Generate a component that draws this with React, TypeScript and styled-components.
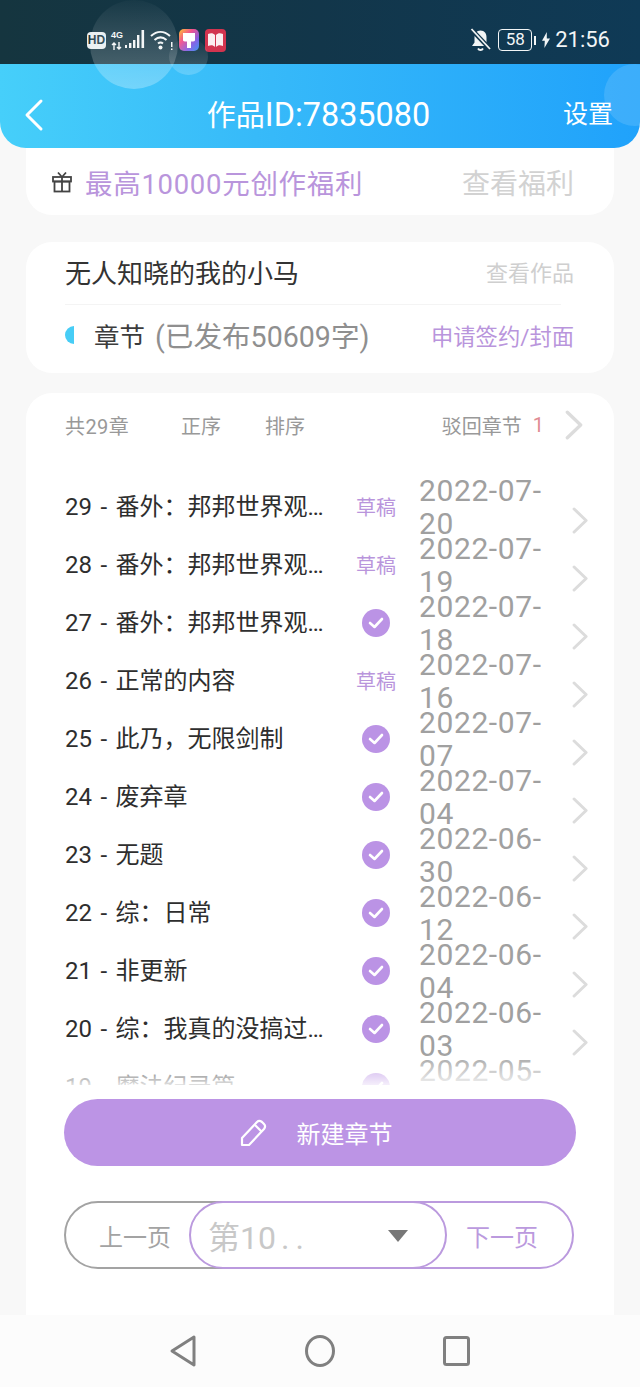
import React from 'react';
import styled, { createGlobalStyle } from 'styled-components';

const Global = createGlobalStyle`
  html, body { margin: 0; padding: 0; background: #f8f8f8; }
  * { box-sizing: border-box; }
  body { font-family: Roboto, "Noto Sans CJK SC", sans-serif; }
`;

const Screen = styled.div`
  position: relative; width: 640px; height: 1387px; overflow: hidden;
  display: flex; flex-direction: column; background: #f8f8f8;
`;
const StatusBar = styled.div`
  height: 64px; flex: none; padding: 16px 30px 0 87px;
  display: flex; justify-content: space-between; align-items: center;
  background: linear-gradient(90deg, #15353f 0%, #12364a 50%, #0f3a56 100%);
  color: #f2f5f6;
`;
const StatusGroup = styled.div`display: flex; align-items: center; gap: ${p => p.$gap ?? 4}px;`;
const HdBadge = styled.span`
  width: 19px; height: 17px; border-radius: 4px; background: #e8eef0; color: #15353f;
  font: 700 12px/17px "Liberation Sans", sans-serif; text-align: center;
`;
const Net = styled.span`
  width: 12px; display: flex; flex-direction: column; align-items: flex-start; gap: 2px;
  font: 700 9px/9px "Liberation Sans", sans-serif; margin-left: 2px; margin-right: -1px;
`;
const Battery = styled.span`
  width: 34px; height: 22px; border: 1.5px solid #f2f5f6; border-radius: 4px;
  font: 400 17px/19px Roboto, sans-serif; text-align: center; margin-left: 4px;
`;
const BatteryTip = styled.span`width: 2px; height: 9px; background: #f2f5f6; margin-left: -1px;`;
const Clock = styled.span`font: 400 22px/26px Roboto, sans-serif; margin-left: 2px;`;
const Bubble = styled.div`
  position: absolute; z-index: 3; pointer-events: none; border-radius: 50%;
  left: ${p => p.$x}px; top: ${p => p.$y}px; width: ${p => p.$w}px; height: ${p => p.$h}px;
  background: ${p => p.$bg};
`;
const Header = styled.header`
  height: 84px; flex: none; position: relative; z-index: 2; padding: 18px 27px 0 24px;
  display: grid; grid-template-columns: 60px 1fr 60px; align-items: center;
  border-radius: 0 0 26px 26px; color: #fff;
  background: linear-gradient(90deg, #46cffa 0%, #37baf9 40%, #20a2fb 100%);
`;
const Title = styled.h1`margin: 0; text-align: center; font-size: 29px; font-weight: 400; line-height: 40px; white-space: nowrap;`;
const TitleId = styled.span`font-size: 32.4px;`;
const Setting = styled.span`font-size: 25px; line-height: 34px; text-align: right; white-space: nowrap;`;
const Card = styled.section`
  margin: 0 26px; background: #fff; border-radius: 26px; flex: none;
`;
const PromoCard = styled(Card)`
  height: 67px; border-radius: 0 0 26px 26px; padding: 0 40px 0 26px;
  display: flex; align-items: center;
`;
const PromoText = styled.span`font-size: 27.5px; letter-spacing: .7px; color: #b995dc; margin-left: 13px; flex: 1; line-height: 36px; padding-top: 6px;`;
const PromoLink = styled.span`font-size: 28px; color: #d2d2d2; line-height: 36px; padding-top: 6px;`;
const WorkCard = styled(Card)`margin-top: 27px; height: 131px; padding: 0 40px 0 39px;`;
const WorkTop = styled.div`
  height: 63px; display: flex; justify-content: space-between; align-items: center; position: relative;
  &::after { content: ""; position: absolute; left: 0; bottom: 0; width: 496px; height: 1px; background: #f4f4f4; }
`;
const WorkName = styled.span`font-size: 26px; color: #333; line-height: 34px;`;
const WorkLink = styled.span`font-size: 22px; color: #cfcfcf; line-height: 30px;`;
const WorkBottom = styled.div`height: 59px; display: flex; align-items: center;`;
const HalfDot = styled.span`width: 9px; height: 18px; border-radius: 9px 0 0 9px; background: #47cdf6; flex: none; margin-right: 20px;`;
const ChapterLabel = styled.span`font-size: 25.5px; color: #3c3c3c;`;
const ChapterCount = styled.span`font-size: 28.6px; color: #8f8f8f; margin-left: 10px; flex: 1; white-space: nowrap;`;
const ApplyLink = styled.span`font-size: 22.3px; color: #b995dc; white-space: nowrap;`;
const ListCard = styled(Card)`
  margin-top: 20px; flex: 1; border-radius: 26px 26px 0 0; padding: 16px 0 0 0;
  display: flex; flex-direction: column;
`;
const ListHead = styled.div`
  height: 32px; flex: none; margin-bottom: 33px; padding: 0 31px 0 39px;
  display: flex; align-items: center; color: #999; font-size: 20px;
`;
const HeadTotal = styled.span`width: 116px; letter-spacing: .4px;`;
const HeadSort = styled.span`width: 84px;`;
const HeadReject = styled.span`margin-left: auto;`;
const HeadBadge = styled.span`color: #e08a93; margin-left: 11px; margin-right: 21px;`;
const ListWrap = styled.div`position: relative; height: 611px; flex: none; overflow: hidden;`;
const Fade = styled.div`
  position: absolute; left: 0; right: 0; bottom: 0; height: 32px; z-index: 2;
  background: linear-gradient(180deg, rgba(255,255,255,0) 0%, rgba(255,255,255,.85) 100%);
`;
const Row = styled.div`
  height: 58px; display: grid; grid-template-columns: 272px 78px 134px 1fr; align-items: center;
  padding-left: 39px;
`;
const RowTitle = styled.span`
  font-size: 24px; color: #2e2e2e; white-space: nowrap; overflow: hidden; text-overflow: ellipsis; line-height: 32px; word-spacing: 2.5px;
`;
const Tag = styled.span`font-size: 20px; color: #b995dc; text-align: center; margin-top: -2px;`;
const Check = styled.span`
  width: 28px; height: 28px; border-radius: 50%; background: #bb93e5; justify-self: center;
  display: flex; align-items: center; justify-content: center;
`;
const RowDate = styled.span`
  font-size: 30px; line-height: 33px; color: #a0a0a0; width: 128px; margin-left: 4px; letter-spacing: .6px;
`;
const RowChevron = styled.span`display: flex; padding: 26px 0 0 23px;`;
const NewButton = styled.button`
  margin: 14px 38px 0; height: 67px; flex: none; border: 0; border-radius: 34px; background: #bc94e5;
  color: #fff; font-family: inherit; font-size: 24px; display: flex; align-items: center; justify-content: center; gap: 29px;
  padding: 0 8px 0 0;
`;
const Pager = styled.div`margin: 35px 40px 0 38px; height: 68px; display: flex; flex: none;`;
const PagerEnd = styled.div`
  height: 100%; border-radius: 34px; border: 2px solid ${p => p.$c}; color: ${p => p.$c};
  width: ${p => p.$w}px; font-size: 24px; display: flex; align-items: center;
  padding-left: ${p => p.$pl}px; background: #fff; flex: none;
`;
const PagerSelect = styled.div`
  position: relative; z-index: 1; width: 258px; margin: 0 -107px 0 -100px; height: 100%; flex: none;
  border: 2px solid #bb9ade; border-radius: 34px; background: #fff;
  display: flex; align-items: center; justify-content: space-between; padding: 0 37px 0 17px;
  color: #c8c8c8; font-size: 32px;
`;
const SelectDots = styled.span`letter-spacing: 6px; margin-left: 5px;`;
const Caret = styled.span`width: 0; height: 0; border-left: 10px solid transparent; border-right: 10px solid transparent; border-top: 12px solid #777; margin-top: 1px;`;
const NavBar = styled.nav`
  height: 72px; flex: none; position: relative; z-index: 2; background: #fcfcfc;
  display: flex; justify-content: center; align-items: center; gap: 108px; padding-right: 2px;
`;

const Chevron = ({ h = 27, c = '#dcdcdc' }: { h?: number; c?: string }) => (
  <svg width={h * 0.6} height={h} viewBox="0 0 16 27" fill="none"><path d="M2 2l12 11.500L2 25" stroke={c} strokeWidth="3" strokeLinecap="round" strokeLinejoin="round" /></svg>
);

const rows: [string, string, string][] = [
  ['29 - 番外：邦邦世界观设定补充', 'd', '2022-07-20'],
  ['28 - 番外：邦邦世界观设定补充', 'd', '2022-07-19'],
  ['27 - 番外：邦邦世界观设定补充', 'c', '2022-07-18'],
  ['26 - 正常的内容', 'd', '2022-07-16'],
  ['25 - 此乃，无限剑制', 'c', '2022-07-07'],
  ['24 - 废弃章', 'c', '2022-07-04'],
  ['23 - 无题', 'c', '2022-06-30'],
  ['22 - 综：日常', 'c', '2022-06-12'],
  ['21 - 非更新', 'c', '2022-06-04'],
  ['20 - 综：我真的没搞过这个东西', 'c', '2022-06-03'],
  ['19 - 魔法纪录篇', 'c', '2022-05-30'],
];

export default function App() {
  return (
    <Screen>
      <Global />
      <Bubble $x={90} $y={0} $w={88} $h={89} $bg="linear-gradient(180deg, rgba(255,255,255,.02), rgba(255,255,255,.28))" />
      <Bubble $x={169} $y={38} $w={39} $h={37} $bg="linear-gradient(180deg, rgba(255,255,255,.02), rgba(255,255,255,.2))" />
      <Bubble $x={604} $y={64} $w={62} $h={62} $bg="rgba(255,255,255,.13)" />
      <StatusBar>
        <StatusGroup $gap={3}>
          <HdBadge>HD</HdBadge>
          <Net>
            4G
            <svg width="11" height="8" viewBox="0 0 11 8" fill="none" stroke="#f2f5f6" strokeWidth="1.400">
              <path d="M3 8V1M1 3l2-2 2 2M8 0v7M6 5l2 2 2-2" />
            </svg>
          </Net>
          <svg width="20" height="22" viewBox="0 0 20 22">
            <g fill="#f2f5f6">
              <rect x="0" y="16" width="2" height="3" /><rect x="4" y="14" width="2.400" height="5" /><rect x="8" y="11" width="2.400" height="8" />
              <rect x="12" y="6" width="2.400" height="13" /><rect x="16.500" y="1" width="2.600" height="18" />
            </g>
          </svg>
          <svg width="24" height="22" viewBox="0 0 24 22" fill="none" style={{ marginLeft: 2 }}>
            <path d="M1 7c6-5.500 13-5.500 19 0M4.500 11c4-3.500 8-3.500 12 0M8 14.500c2-1.600 3-1.600 5 0" stroke="#f2f5f6" strokeWidth="2" />
            <circle cx="10.500" cy="18.500" r="2" fill="#f2f5f6" />
            <rect x="21" y="13" width="1.500" height="5" fill="#f2f5f6" /><rect x="21" y="19.500" width="1.500" height="1.500" fill="#f2f5f6" />
          </svg>
          <svg width="20" height="22" viewBox="0 0 20 22" style={{ marginLeft: 2 }}>
            <defs>
              <linearGradient id="pg" x1="0" y1="0" x2="1" y2="1">
                <stop offset="0" stopColor="#ffc62e" /><stop offset=".35" stopColor="#f2528e" /><stop offset=".7" stopColor="#7d5fe6" /><stop offset="1" stopColor="#2f8df0" />
              </linearGradient>
            </defs>
            <rect width="20" height="22" rx="5" fill="url(#pg)" />
            <path d="M4 4h12v7c0 1-1 1.500-4 1.500V19H8v-6.500c-3 0-4-.5-4-1.500z" fill="#fff" />
          </svg>
          <svg width="21" height="23" viewBox="0 0 21 23" style={{ marginLeft: 3 }}>
            <rect width="21" height="23" rx="4" fill="#d2344f" />
            <path d="M3 5c3-1 5-1 7 1v12c-2-2-4-2-7-1zM18 5c-3-1-5-1-7 1v12c2-2 4-2 7-1z" fill="#fbeef0" />
          </svg>
        </StatusGroup>
        <StatusGroup $gap={3}>
          <svg width="21" height="24" viewBox="0 0 21 24" fill="none">
            <path d="M10.500 2.500c4 0 6 3 6 7v5l2.500 3.500H2l2.500-3.500v-5c0-4 2-7 6-7z" fill="#f2f5f6" />
            <path d="M8 20.500c1 2 4 2 5 0" stroke="#f2f5f6" strokeWidth="1.800" />
            <path d="M1 1l19 20" stroke="#14384e" strokeWidth="4.500" /><path d="M1.500 1l18.500 20" stroke="#f2f5f6" strokeWidth="1.800" />
          </svg>
          <Battery>58</Battery>
          <BatteryTip />
          <svg width="8" height="20" viewBox="0 0 10 20" style={{ marginLeft: 3 }}><path d="M6 0L0 11h3.500L3 20l7-12H6z" fill="#f2f5f6" /></svg>
          <Clock>21:56</Clock>
        </StatusGroup>
      </StatusBar>
      <Header>
        <svg width="20" height="34" viewBox="0 0 20 34" fill="none"><path d="M17 3L3 17l14 14" stroke="#fff" strokeWidth="3" strokeLinecap="round" strokeLinejoin="round" /></svg>
        <Title>作品<TitleId>ID:7835080</TitleId></Title>
        <Setting>设置</Setting>
      </Header>
      <PromoCard>
        <svg width="20" height="22" viewBox="0 0 20 22" fill="none" stroke="#444" strokeWidth="1.800">
          <rect x="1" y="6" width="18" height="4.500" /><rect x="2.500" y="10.500" width="15" height="10" /><path d="M10 6v14.500M6 1.500L10 6l4-4.500" />
        </svg>
        <PromoText>最高10000元创作福利</PromoText>
        <PromoLink>查看福利</PromoLink>
      </PromoCard>
      <WorkCard>
        <WorkTop>
          <WorkName>无人知晓的我的小马</WorkName>
          <WorkLink>查看作品</WorkLink>
        </WorkTop>
        <WorkBottom>
          <HalfDot />
          <ChapterLabel>章节</ChapterLabel>
          <ChapterCount>(已发布50609字)</ChapterCount>
          <ApplyLink>申请签约/封面</ApplyLink>
        </WorkBottom>
      </WorkCard>
      <ListCard>
        <ListHead>
          <HeadTotal>共29章</HeadTotal>
          <HeadSort>正序</HeadSort>
          <HeadSort>排序</HeadSort>
          <HeadReject>驳回章节</HeadReject>
          <HeadBadge>1</HeadBadge>
          <Chevron h={30} />
        </ListHead>
        <ListWrap>
          {rows.map(([title, state, date]) => (
            <Row key={title}>
              <RowTitle>{title}</RowTitle>
              {state === 'd' ? <Tag>草稿</Tag> : (
                <Check>
                  <svg width="16" height="12" viewBox="0 0 16 12" fill="none"><path d="M2 6l4.500 4L14 2" stroke="#fff" strokeWidth="2.600" strokeLinecap="round" strokeLinejoin="round" /></svg>
                </Check>
              )}
              <RowDate>{date}</RowDate>
              <RowChevron><Chevron /></RowChevron>
            </Row>
          ))}
          <Fade />
        </ListWrap>
        <NewButton>
          <svg width="28" height="28" viewBox="0 0 28 28" fill="none" stroke="#fff" strokeWidth="2.200" strokeLinejoin="round">
            <path d="M2 26v-7L17 3c1.500-1.500 3-1.500 5 0l2 2c1.500 1.500 1.500 3 0 5L9 26z" /><path d="M15 6l7 7" />
          </svg>
          新建章节
        </NewButton>
        <Pager>
          <PagerEnd $c="#a3a3a3" $w={225} $pl={33}>上一页</PagerEnd>
          <PagerSelect><span>第10<SelectDots>..</SelectDots></span><Caret /></PagerSelect>
          <PagerEnd $c="#bb9ade" $w={234} $pl={124}>下一页</PagerEnd>
        </Pager>
      </ListCard>
      <NavBar>
        <svg width="28" height="34" viewBox="0 0 28 34" fill="none"><path d="M25 3L3 17l22 14z" stroke="#808080" strokeWidth="3" strokeLinejoin="round" /></svg>
        <svg width="30" height="32" viewBox="0 0 30 32" fill="none"><ellipse cx="15" cy="16" rx="13.500" ry="14.500" stroke="#808080" strokeWidth="3" /></svg>
        <svg width="27" height="30" viewBox="0 0 27 30" fill="none"><rect x="1.500" y="1.500" width="24" height="27" rx="2" stroke="#808080" strokeWidth="3" /></svg>
      </NavBar>
    </Screen>
  );
}
